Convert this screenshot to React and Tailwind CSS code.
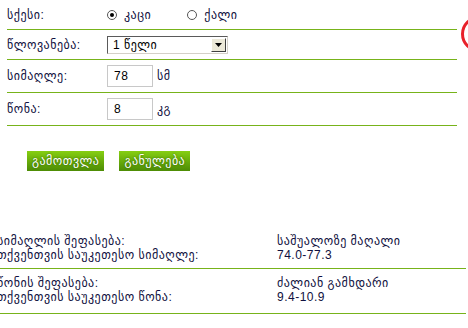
import React from "react";

const font = { fontFamily: '"Liberation Sans", "DejaVu Sans", sans-serif' };

function Radio({ checked, label }) {
  return (
    <label className="flex items-center gap-[7px]">
      <span className="w-[10px] h-[10px] rounded-full border border-[#555] bg-white flex items-center justify-center">
        {checked && <span className="w-[4px] h-[4px] rounded-full bg-black" />}
      </span>
      <span>{label}</span>
    </label>
  );
}

function Row({ label, h, children }) {
  return (
    <div className={`flex items-center border-b border-[#77b31a] ${h}`}>
      <div className="w-[100px] shrink-0">{label}</div>
      <div className="flex items-center">{children}</div>
    </div>
  );
}

function GreenButton({ children }) {
  return (
    <button className="h-[20px] px-[5px] text-white text-[12px] tracking-[0.5px] bg-gradient-to-b from-[#86cf12] to-[#4d8c05] [text-shadow:0_0_2px_#2b5c00]">
      {children}
    </button>
  );
}

export default function App() {
  return (
    <div className="relative w-[468px] h-[328px] overflow-hidden bg-white text-[12px] tracking-[0.5px] text-[#101040]" style={font}>
      {/* form */}
      <div className="ml-[7px] w-[450px]">
        <Row label="სქესი:" h="h-[30px]">
          <div className="flex items-center gap-[36px]">
            <Radio checked label="კაცი" />
            <Radio label="ქალი" />
          </div>
        </Row>
        <Row label="წლოვანება:" h="h-[30px]">
          <div className="w-[121px] h-[18px] flex items-stretch bg-white border-t border-l border-[#5a5a5a] border-b border-r border-b-[#d4d0c8] border-r-[#d4d0c8]">
            <span className="flex-1 pl-[5px] leading-[16px] text-black">1 წელი</span>
            <span className="w-[15px] m-[1px] flex items-center justify-center bg-[#ece9d8] border border-t-white border-l-white border-b-[#404040] border-r-[#404040]">
              <svg width="7" height="4" viewBox="0 0 7 4"><path d="M0 0h7L3.5 4z" fill="#000" /></svg>
            </span>
          </div>
        </Row>
        <Row label="სიმაღლე:" h="h-[33px]">
          <input readOnly value="78" className="w-[46px] h-[22px] border border-[#c8c8c8] px-[6px] text-[12px] text-black outline-none" />
          <span className="ml-[4px]">სმ</span>
        </Row>
        <Row label="წონა:" h="h-[33px]">
          <input readOnly value="8" className="w-[46px] h-[22px] border border-[#c8c8c8] px-[6px] text-[12px] text-black outline-none" />
          <span className="ml-[4px]">კგ</span>
        </Row>
      </div>

      <div className="flex gap-[15px] ml-[27px] mt-[25px]">
        <GreenButton>გამოთვლა</GreenButton>
        <GreenButton>განულება</GreenButton>
      </div>

      {/* results */}
      <div className="mt-[63px] w-[466px]">
        <div className="flex border-b border-[#77b31a] pb-[6px] leading-[14px]">
          <div className="w-[280px] -ml-[3px]">
            <div>სიმაღლის შეფასება:</div>
            <div>თქვენთვის საუკეთესო სიმაღლე:</div>
          </div>
          <div>
            <div>საშუალოზე მაღალი</div>
            <div>74.0-77.3</div>
          </div>
        </div>
        <div className="flex border-b border-[#77b31a] pt-[7px] pb-[9px] leading-[14px]">
          <div className="w-[280px] -ml-[3px]">
            <div>წონის შეფასება:</div>
            <div>თქვენთვის საუკეთესო წონა:</div>
          </div>
          <div>
            <div>ძალიან გამხდარი</div>
            <div>9.4-10.9</div>
          </div>
        </div>
      </div>

      <span className="absolute left-[461px] top-[16px] w-[36px] h-[36px] rounded-full border-[3px] border-[#e8202a]" />
    </div>
  );
}
